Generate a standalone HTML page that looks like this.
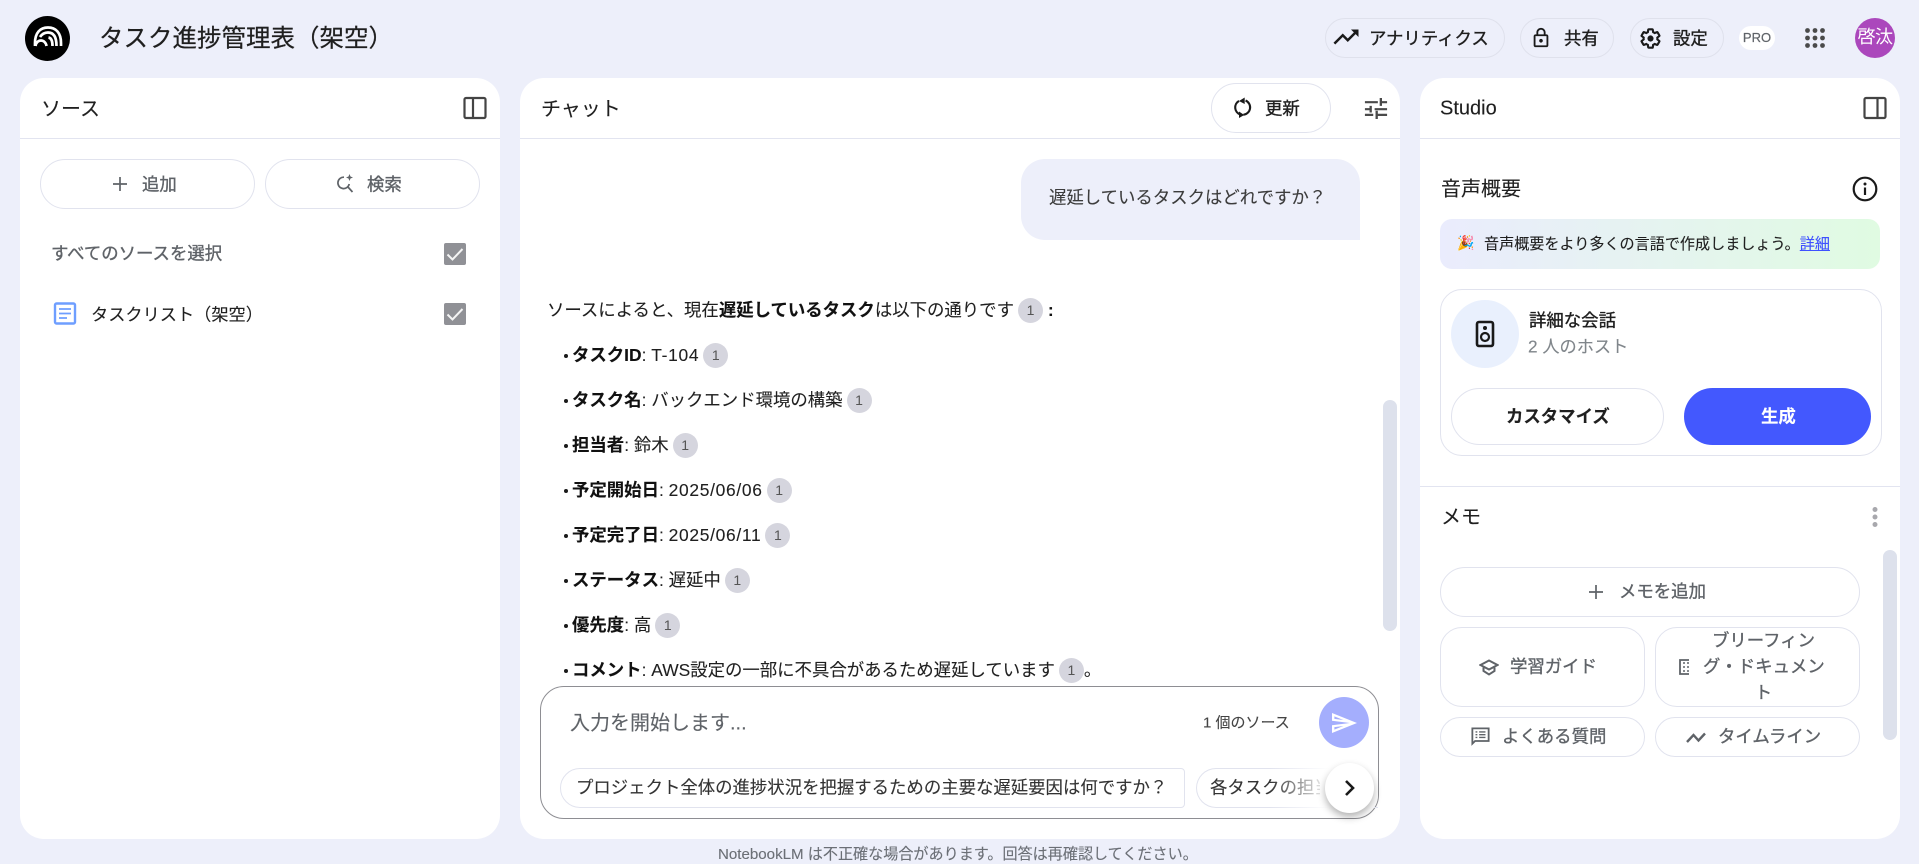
<!DOCTYPE html>
<html lang="ja"><head><meta charset="utf-8"><title>タスク進捗管理表（架空）</title>
<style>
*{box-sizing:border-box}
html,body{margin:0;padding:0;width:1919px;height:857px;overflow:hidden;background:#edeffa;font-family:"Liberation Sans","Noto Sans CJK JP",sans-serif;color:#1f1f1f}
.a{position:absolute;white-space:nowrap}
.panel{position:absolute;top:78px;height:761px;background:#fff;border-radius:24px}
.hr{position:absolute;height:1px;background:#e2e4f0}
.btn{position:absolute;border:1px solid #e1e3ee;border-radius:25px;background:#fff}
.t{position:absolute;white-space:nowrap;transform:translateY(-50%);-webkit-text-stroke:.12px currentColor}
.m{-webkit-text-stroke:.35px currentColor}
svg{position:absolute;display:block}
.line{position:absolute;left:547px;white-space:nowrap;font-size:17.4px;line-height:25px;height:25px;color:#1f1f1f;-webkit-text-stroke:.1px currentColor}
.line.li{left:572px}
.line i{position:absolute;left:-8px;top:11px;width:4px;height:4px;border-radius:50%;background:#1a1a1a}
.line b{font-weight:700;color:#111}
.line u{text-decoration:none;letter-spacing:.7px}
.bd{display:inline-block;width:25px;height:25px;border-radius:50%;background:#d5d5de;color:#555;font-size:14px;line-height:25px;text-align:center;font-weight:400;margin-left:4px;vertical-align:top;letter-spacing:0;-webkit-text-stroke:0}
</style></head><body>

<!-- top bar -->
<svg style="left:25px;top:16px" width="45" height="45" viewBox="0 0 45 45"><circle cx="22.5" cy="22.5" r="22.5" fill="#000"/><path d="M10 30v-3C10 17 15 11.500 23 11.500S36 17 36 27v3M15 21c2-3 4.500-4.500 8-4.500 5.500 0 8.500 4.500 8.500 13.500M23.500 21.500c3 .5 4 4 4 8.500M10.500 30c.5-3.500 3-5.500 5.500-5.500s5 2 5.500 5.500" fill="none" stroke="#fff" stroke-width="2.700"/></svg>
<div class="t m" style="left:99px;top:37px;font-size:24.5px;-webkit-text-stroke:.2px #1f1f1f;color:#1f1f1f">タスク進捗管理表（架空）</div>

<div class="btn" style="left:1325px;top:18px;width:180px;height:40px;background:#edeffa;border-color:#dfe1ec"></div>
<svg style="left:1331px;top:22px" width="30" height="30" viewBox="0 0 24 24"><path fill="#1a1a1a" d="M16 6l2.290 2.290-4.880 4.880-4-4L2 16.590 3.410 18l6-6 4 4 6.300-6.290L22 12V6z"/></svg>
<div class="t m" style="left:1369px;top:38px;font-size:17.4px;color:#1f1f1f">アナリティクス</div>

<div class="btn" style="left:1520px;top:18px;width:94px;height:40px;background:#edeffa;border-color:#dfe1ec"></div>
<svg style="left:1530px;top:27px" width="22" height="22" viewBox="0 0 24 24"><path fill="#1a1a1a" d="M18 8h-1V6c0-2.760-2.240-5-5-5S7 3.240 7 6v2H6c-1.100 0-2 .9-2 2v10c0 1.100.9 2 2 2h12c1.100 0 2-.9 2-2V10c0-1.100-.9-2-2-2zM9 6c0-1.660 1.340-3 3-3s3 1.340 3 3v2H9V6zm9 14H6V10h12v10zm-6-3c1.100 0 2-.9 2-2s-.9-2-2-2-2 .9-2 2 .9 2 2 2z"/></svg>
<div class="t m" style="left:1564px;top:38px;font-size:17.4px">共有</div>

<div class="btn" style="left:1630px;top:18px;width:94px;height:40px;background:#edeffa;border-color:#dfe1ec"></div>
<svg style="left:1639px;top:27px" width="23" height="23" viewBox="0 0 24 24"><path fill="none" stroke="#1a1a1a" stroke-width="2.200" d="M19.140 12.940c.04-.3.06-.61.06-.94 0-.32-.02-.64-.07-.94l2.030-1.580c.18-.14.23-.41.12-.61l-1.920-3.320c-.12-.22-.37-.29-.59-.22l-2.390.96c-.5-.38-1.030-.7-1.620-.94l-.36-2.540c-.04-.24-.24-.41-.48-.41h-3.840c-.24 0-.43.17-.47.41l-.36 2.540c-.59.24-1.130.57-1.620.94l-2.390-.96c-.22-.08-.47 0-.59.22L2.740 8.870c-.12.21-.08.47.12.61l2.030 1.580c-.05.3-.09.63-.09.94s.02.64.07.94l-2.030 1.580c-.18.14-.23.41-.12.61l1.920 3.320c.12.22.37.29.59.22l2.390-.96c.5.38 1.030.7 1.620.94l.36 2.540c.05.24.24.41.48.41h3.840c.24 0 .44-.17.47-.41l.36-2.540c.59-.24 1.130-.56 1.620-.94l2.390.96c.22.08.47 0 .59-.22l1.920-3.320c.12-.22.07-.47-.12-.61l-2.010-1.580z"/><circle cx="12" cy="12" r="3.200" fill="#1a1a1a"/></svg>
<div class="t m" style="left:1673px;top:38px;font-size:17.4px">設定</div>

<div class="a" style="left:1739px;top:26px;width:36px;height:24px;border-radius:12px;background:#fff;text-align:center;font-size:13px;line-height:24px;color:#5f6368;-webkit-text-stroke:.2px #5f6368">PRO</div>
<svg style="left:1805px;top:28px" width="20" height="20" viewBox="0 0 20 20" fill="#4a4a4a"><circle cx="2.500" cy="2.500" r="2.400"/><circle cx="10" cy="2.500" r="2.400"/><circle cx="17.500" cy="2.500" r="2.400"/><circle cx="2.500" cy="10" r="2.400"/><circle cx="10" cy="10" r="2.400"/><circle cx="17.500" cy="10" r="2.400"/><circle cx="2.500" cy="17.500" r="2.400"/><circle cx="10" cy="17.500" r="2.400"/><circle cx="17.500" cy="17.500" r="2.400"/></svg>
<div class="a" style="left:1855px;top:18px;width:40px;height:40px;border-radius:50%;background:#ab47bc;color:#fff;text-align:center;font-size:18px;line-height:39px;letter-spacing:-.5px">啓汰</div>

<!-- left panel -->
<div class="panel" style="left:20px;width:480px"></div>
<div class="t" style="left:41px;top:107px;font-size:20px;color:#1f1f1f">ソース</div>
<svg style="left:463px;top:96px" width="24" height="24" viewBox="0 0 24 24"><rect x="1.500" y="2" width="21" height="20" rx="1.500" fill="none" stroke="#444" stroke-width="2.200"/><path d="M10 2v20" stroke="#444" stroke-width="2.200"/></svg>
<div class="hr" style="left:20px;top:138px;width:480px"></div>
<div class="btn" style="left:40px;top:159px;width:215px;height:50px"></div>
<svg style="left:111px;top:175px" width="18" height="18" viewBox="0 0 18 18"><path d="M9 2v14M2 9h14" stroke="#5f6368" stroke-width="1.700"/></svg>
<div class="t m" style="left:142px;top:184px;font-size:17.4px;color:#5f6368">追加</div>
<div class="btn" style="left:265px;top:159px;width:215px;height:50px"></div>
<svg style="left:335px;top:174px" width="20" height="20" viewBox="0 0 20 20"><path d="M9 3.200a5.700 5.700 0 1 0 5.200 6.800M12.500 12.500L17.500 18" fill="none" stroke="#5f6368" stroke-width="1.700"/><path d="M14.500 0l1 2.500 2.500 1-2.500 1-1 2.500-1-2.500-2.500-1 2.500-1z" fill="#5f6368"/></svg>
<div class="t m" style="left:367px;top:184px;font-size:17.4px;color:#5f6368">検索</div>

<div class="t m" style="left:51px;top:253px;font-size:17.4px;color:#5f6368">すべてのソースを選択</div>
<svg style="left:444px;top:243px" width="22" height="22" viewBox="0 0 22 22"><rect width="22" height="22" rx="2" fill="#909196"/><path d="M3.500 11.500l5 5L18.500 6" fill="none" stroke="#f4f4f4" stroke-width="2"/></svg>
<svg style="left:53px;top:302px" width="24" height="23" viewBox="0 0 24 23"><rect x="2" y="1.500" width="20" height="20" rx="1.500" fill="none" stroke="#6e9eff" stroke-width="2.400"/><path d="M6 7h12M6 11.500h12M6 16h8" stroke="#6e9eff" stroke-width="1.800"/></svg>
<div class="t" style="left:91px;top:313px;font-size:17.2px;color:#1f1f1f">タスクリスト（架空）</div>
<svg style="left:444px;top:303px" width="22" height="22" viewBox="0 0 22 22"><rect width="22" height="22" rx="2" fill="#909196"/><path d="M3.500 11.500l5 5L18.500 6" fill="none" stroke="#f4f4f4" stroke-width="2"/></svg>

<!-- chat panel -->
<div class="panel" style="left:520px;width:880px"></div>
<div class="t" style="left:541px;top:107px;font-size:20px">チャット</div>
<div class="btn" style="left:1211px;top:83px;width:120px;height:50px"></div>
<svg style="left:1232px;top:97px" width="21" height="21" viewBox="0 0 24 24"><path d="M8 4.500A8.500 8.500 0 0 0 9.500 20M15.500 4A8.500 8.500 0 0 1 13 20.300" fill="none" stroke="#1a1a1a" stroke-width="2.400"/><path d="M14.500 .5L8 4.500l6.500 3.500zM8 16.500v7.500l6-3.500z" fill="#1a1a1a"/></svg>
<div class="t m" style="left:1265px;top:108px;font-size:17.4px">更新</div>
<svg style="left:1364px;top:98px" width="24" height="21" viewBox="0 0 26 24" preserveAspectRatio="none"><path fill="#4a4a4a" d="M1 18h9v2.500H1zM1 3.500h14V6H1zM15 24v-3.500h10V18H15v-3.500h-2.500V24zM6 9v2.500H1V14h5v2.500h2.500V9zM25 14v-2.500H11.500V14zM17 9h2.500V6H25V3.500h-5.500V0H17z"/></svg>
<div class="hr" style="left:520px;top:138px;width:880px"></div>

<div class="a" style="left:1021px;top:159px;width:339px;height:81px;background:#edeffa;border-radius:24px 24px 0 24px"></div>
<div class="t" style="left:1049px;top:197px;font-size:17.4px;color:#3c3c3c">遅延しているタスクはどれですか？</div>

<div class="line" style="top:298px">ソースによると、現在<b>遅延しているタスク</b>は以下の通りです<span class="bd">1</span> <b>:</b></div>
<div class="line li" style="top:343px"><i></i><b>タスクID</b>: <u>T-104</u><span class="bd">1</span></div>
<div class="line li" style="top:388px"><i></i><b>タスク名</b>: バックエンド環境の構築<span class="bd">1</span></div>
<div class="line li" style="top:433px"><i></i><b>担当者</b>: 鈴木<span class="bd">1</span></div>
<div class="line li" style="top:478px"><i></i><b>予定開始日</b>: <u>2025/06/06</u><span class="bd">1</span></div>
<div class="line li" style="top:523px"><i></i><b>予定完了日</b>: <u>2025/06/11</u><span class="bd">1</span></div>
<div class="line li" style="top:568px"><i></i><b>ステータス</b>: 遅延中<span class="bd">1</span></div>
<div class="line li" style="top:613px"><i></i><b>優先度</b>: 高<span class="bd">1</span></div>
<div class="line li" style="top:658px"><i></i><b>コメント</b>: AWS設定の一部に不具合があるため遅延しています<span class="bd">1</span>。</div>
<div class="a" style="left:1383px;top:400px;width:14px;height:231px;border-radius:7px;background:#dde1ec"></div>

<div class="a" style="left:540px;top:686px;width:839px;height:133px;background:#fff;border:1px solid #8e8e93;border-radius:24px"></div>
<div class="t" style="left:570px;top:721px;font-size:20px;color:#5f6368">入力を開始します...</div>
<div class="t" style="left:1203px;top:722px;font-size:15px;color:#444">1 個のソース</div>
<svg style="left:1319px;top:697px" width="50" height="51" viewBox="0 0 50 51"><ellipse cx="25" cy="25.500" rx="25" ry="25.500" fill="#a4aefd"/><path transform="translate(13,16) scale(1.19,1.11) translate(-2,-3)" fill="#fff" d="M4.010 6.030l7.510 3.220-7.520-1 .01-2.220m7.500 8.720L4 17.970v-2.220l7.510-1M2.010 3L2 10l15 2-15 2 .01 7L23 12 2.010 3z"/></svg>
<div class="a" style="left:560px;top:768px;width:625px;height:40px;border:1px solid #e1e3ee;border-radius:20px 4px 4px 20px"></div>
<div class="t" style="left:576px;top:787px;font-size:17.4px;color:#333">プロジェクト全体の進捗状況を把握するための主要な遅延要因は何ですか？</div>
<div class="a" style="left:1196px;top:768px;width:182px;height:40px;overflow:hidden;border:1px solid #e1e3ee;border-radius:20px 0 0 20px;border-right:0"></div>
<div class="t" style="left:1210px;top:787px;font-size:17.4px;color:#333;width:110px;overflow:hidden">各タスクの担当者</div>
<div class="a" style="left:1270px;top:762px;width:108px;height:55px;background:linear-gradient(90deg,rgba(255,255,255,0),#fff 55%);border-radius:0 0 22px 0"></div>
<div class="a" style="left:1325px;top:763px;width:49px;height:50px;border-radius:50%;background:#fff;box-shadow:0 4px 8px rgba(0,0,0,.3)"></div>
<svg style="left:1342px;top:779px" width="16" height="18" viewBox="0 0 16 18"><path d="M4 2l7 7-7 7" fill="none" stroke="#1a1a1a" stroke-width="2.600"/></svg>

<!-- studio panel -->
<div class="panel" style="left:1420px;width:480px"></div>
<div class="t" style="left:1440px;top:109px;font-size:20px">Studio</div>
<svg style="left:1863px;top:96px" width="24" height="24" viewBox="0 0 24 24"><rect x="1.500" y="2" width="21" height="20" rx="1.500" fill="none" stroke="#444" stroke-width="2.200"/><path d="M14.500 2v20" stroke="#444" stroke-width="2.200"/></svg>
<div class="hr" style="left:1420px;top:138px;width:480px"></div>
<div class="t" style="left:1441px;top:187px;font-size:20px">音声概要</div>
<svg style="left:1852px;top:176px" width="26" height="26" viewBox="0 0 26 26"><circle cx="13" cy="13" r="11.300" fill="none" stroke="#1a1a1a" stroke-width="2.200"/><path d="M13 11.500v7.500" stroke="#1a1a1a" stroke-width="2.200"/><circle cx="13" cy="8" r="1.500" fill="#1a1a1a"/></svg>
<div class="a" style="left:1440px;top:219px;width:440px;height:50px;border-radius:12px;background:linear-gradient(90deg,#eaecfd,#e0fbe2)"></div>
<div class="t" style="left:1457px;top:243px;font-size:14px">🎉</div>
<div class="t" style="left:1484px;top:243px;font-size:15.1px;color:#1f1f1f">音声概要をより多くの言語で作成しましょう。<span style="color:#3f51ff;text-decoration:underline">詳細</span></div>

<div class="a" style="left:1440px;top:289px;width:442px;height:167px;border:1px solid #e1e3ee;border-radius:22px"></div>
<div class="a" style="left:1451px;top:300px;width:68px;height:68px;border-radius:50%;background:#e9f0fd"></div>
<svg style="left:1475px;top:320px" width="20" height="28" viewBox="0 0 20 28"><rect x="2" y="2" width="16" height="24" rx="2" fill="none" stroke="#1a1a1a" stroke-width="2.600"/><circle cx="10" cy="8" r="2" fill="#1a1a1a"/><circle cx="10" cy="17" r="4" fill="none" stroke="#1a1a1a" stroke-width="2.200"/></svg>
<div class="t m" style="left:1529px;top:320px;font-size:17.4px;color:#1f1f1f">詳細な会話</div>
<div class="t" style="left:1528px;top:345px;font-size:17.2px;color:#80868b">2 人のホスト</div>
<div class="btn" style="left:1451px;top:388px;width:213px;height:57px;border-radius:29px"></div>
<div class="t" style="left:1506px;top:416px;font-size:17.4px;font-weight:700;color:#1f1f1f">カスタマイズ</div>
<div class="a" style="left:1684px;top:388px;width:187px;height:57px;border-radius:29px;background:#4358fe"></div>
<div class="t" style="left:1761px;top:416px;font-size:17.4px;font-weight:700;color:#fff">生成</div>
<div class="hr" style="left:1420px;top:486px;width:480px"></div>
<div class="t" style="left:1441px;top:515px;font-size:20px">メモ</div>
<svg style="left:1870px;top:507px" width="10" height="20" viewBox="0 0 10 20" fill="#a8a8ad"><circle cx="5" cy="2.500" r="2.500"/><circle cx="5" cy="10" r="2.500"/><circle cx="5" cy="17.500" r="2.500"/></svg>
<div class="a" style="left:1883px;top:550px;width:14px;height:190px;border-radius:7px;background:#dde1ec"></div>

<div class="btn" style="left:1440px;top:567px;width:420px;height:50px"></div>
<svg style="left:1587px;top:583px" width="18" height="18" viewBox="0 0 18 18"><path d="M9 2v14M2 9h14" stroke="#5f6368" stroke-width="1.700"/></svg>
<div class="t m" style="left:1619px;top:591px;font-size:17.4px;color:#5f6368">メモを追加</div>

<div class="btn" style="left:1440px;top:627px;width:205px;height:80px;border-radius:22px"></div>
<svg style="left:1479px;top:659px" width="20" height="17" viewBox="0 0 20 17"><path d="M1.500 6L10 1.500 18.500 6 10 10.500zM4.500 8.500v3.500l5.500 3.500 5.500-3.500V8.500" fill="none" stroke="#5f6368" stroke-width="2"/></svg>
<div class="t m" style="left:1510px;top:666px;font-size:17.4px;color:#5f6368">学習ガイド</div>

<div class="btn" style="left:1655px;top:627px;width:205px;height:80px;border-radius:22px"></div>
<svg style="left:1679px;top:659px" width="10" height="16" viewBox="0 0 10 16"><path d="M10 1H1v14h9" fill="none" stroke="#5f6368" stroke-width="1.800"/><path d="M4 4h2M8 4h2M4 8h2M8 8h2M4 12h2M8 12h2" stroke="#5f6368" stroke-width="1.500"/></svg>
<div class="t m" style="left:1703px;width:121px;top:640px;font-size:17.4px;color:#5f6368;text-align:center">ブリーフィン</div>
<div class="t m" style="left:1703px;width:121px;top:666px;font-size:17.4px;color:#5f6368;text-align:center">グ・ドキュメン</div>
<div class="t m" style="left:1703px;width:121px;top:692px;font-size:17.4px;color:#5f6368;text-align:center">ト</div>

<div class="btn" style="left:1440px;top:717px;width:205px;height:40px"></div>
<svg style="left:1471px;top:727px" width="19" height="19" viewBox="0 0 21 21"><path d="M1.500 1.500h18v14H4.500l-3 3z" fill="none" stroke="#5f6368" stroke-width="2"/><path d="M5 5.500h2M9 5.500h7M5 8.500h2M9 8.500h7M5 11.500h2M9 11.500h7" stroke="#5f6368" stroke-width="1.500"/></svg>
<div class="t m" style="left:1502px;top:736px;font-size:17.4px;color:#5f6368">よくある質問</div>

<div class="btn" style="left:1655px;top:717px;width:205px;height:40px"></div>
<svg style="left:1685px;top:731px" width="22" height="14" viewBox="0 0 22 14"><path d="M2 11L8.500 4l5 5.500L20 2.500" fill="none" stroke="#5f6368" stroke-width="2.400"/></svg>
<div class="t m" style="left:1718px;top:736px;font-size:17.4px;color:#5f6368">タイムライン</div>

<div class="t" style="left:718px;top:853px;font-size:15.1px;color:#6b6f76">NotebookLM は不正確な場合があります。回答は再確認してください。</div>
</body></html>
